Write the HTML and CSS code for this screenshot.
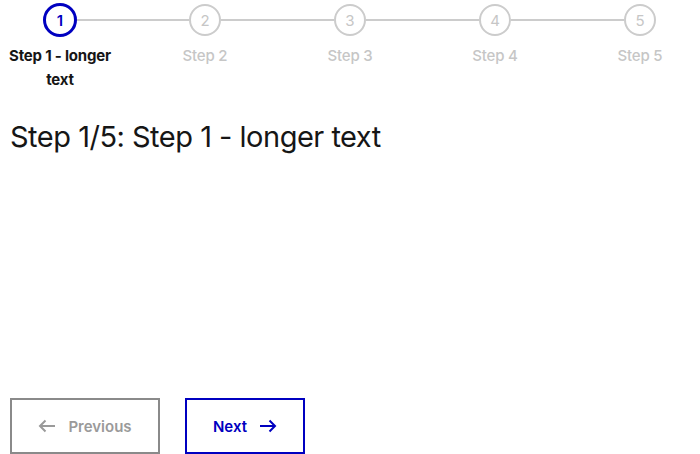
FILE: index.html
```html
<!DOCTYPE html>
<html>
<head>
<meta charset="utf-8">
<link rel="stylesheet" href="styles.css">
</head>
<body>
<div class="page">
  <ol class="stepper">
    <li class="step active">
      <div class="track"><span class="line left"></span><span class="dot">1</span><span class="line right"></span></div>
      <span class="label">Step 1 - longer text</span>
    </li>
    <li class="step">
      <div class="track"><span class="line left"></span><span class="dot">2</span><span class="line right"></span></div>
      <span class="label">Step 2</span>
    </li>
    <li class="step">
      <div class="track"><span class="line left"></span><span class="dot">3</span><span class="line right"></span></div>
      <span class="label">Step 3</span>
    </li>
    <li class="step">
      <div class="track"><span class="line left"></span><span class="dot">4</span><span class="line right"></span></div>
      <span class="label">Step 4</span>
    </li>
    <li class="step">
      <div class="track"><span class="line left"></span><span class="dot">5</span><span class="line right"></span></div>
      <span class="label">Step 5</span>
    </li>
  </ol>
  <h1 class="title">Step 1/5: Step 1 - longer text</h1>
  <div class="actions">
    <button class="btn prev">
      <svg width="18" height="14" viewBox="0 0 18 14"><path d="M17 7H2M7.5 1.5L2 7l5.5 5.5" fill="none" stroke="currentColor" stroke-width="2"/></svg>
      <span>Previous</span>
    </button>
    <button class="btn next">
      <span>Next</span>
      <svg width="18" height="14" viewBox="0 0 18 14"><path d="M1 7h15M10.5 1.5L16 7l-5.5 5.5" fill="none" stroke="currentColor" stroke-width="2"/></svg>
    </button>
  </div>
</div>
</body>
</html>
```
FILE: styles.css
```css
* { box-sizing: border-box; }
html, body { margin: 0; padding: 0; background: #fff; }
body { font-family: Inter, "Liberation Sans", Arial, sans-serif; color: #161616; }
.page { width: 700px; height: 454px; display: flex; flex-direction: column; }
.stepper {
  list-style: none; margin: 0; padding: 3px 0 0 0;
  display: flex; gap: 25px;
}
.step { width: 120px; display: flex; flex-direction: column; align-items: center; }
.track { width: 120px; height: 34px; display: flex; align-items: center; }
.line { height: 2px; background: #cccccc; flex: 1 1 0; }
.line.right { flex-basis: 25px; margin-right: -25px; }
.step:first-child .line.left { background: transparent; }
.step:last-child .line.right { background: transparent; flex-basis: 0; margin-right: 0; }
.dot {
  width: 32px; height: 32px; border-radius: 50%;
  border: 2px solid #cccccc; color: #c6c6c6;
  display: flex; align-items: center; justify-content: center;
  font-size: 15px; font-weight: 400; flex: none;
}
.active .dot { width: 34px; height: 34px; border: 3px solid #0000c0; color: #0000c0; font-weight: 600; }
.label {
  margin-top: 7px; text-align: center; font-size: 15px; line-height: 24px;
  color: #c6c6c6; font-weight: 500; padding: 0 4px; letter-spacing: -0.2px;
}
.active .label { color: #161616; font-weight: 700; }
.title {
  margin: 28px 0 0 10px; font-size: 29px; font-weight: 400; line-height: 34px;
  letter-spacing: -0.5px;
}
.actions { margin-top: auto; padding: 0 0 0 10px; display: flex; gap: 25px; }
.btn {
  height: 56px; background: #fff; font-family: inherit; font-size: 15px; font-weight: 600;
  display: flex; align-items: center; justify-content: center; gap: 12px; cursor: pointer;
}
.prev { width: 150px; border: 2px solid #8a8a8a; color: #9a9a9a; }
.next { width: 120px; border: 2px solid #0000c0; color: #0000c0; }
```
